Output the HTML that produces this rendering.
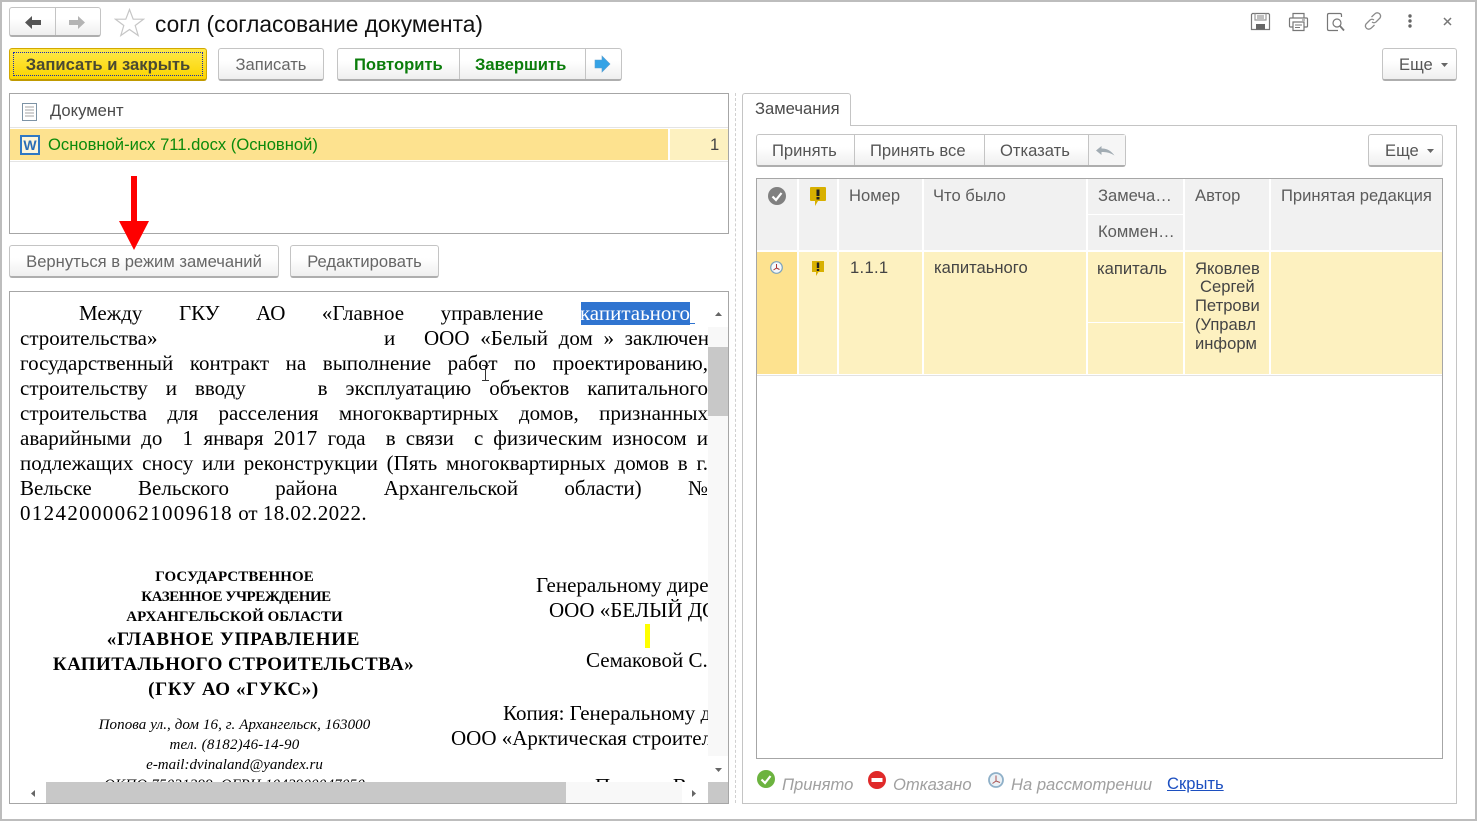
<!DOCTYPE html>
<html lang="ru"><head><meta charset="utf-8"><title>согл</title>
<style>
html,body{margin:0;padding:0;background:#fff}
body{width:1477px;height:821px;position:relative;overflow:hidden;font-family:"Liberation Sans",sans-serif;color:#4a4a4a;font-size:16.6px}
.a{position:absolute}
.t{position:absolute;white-space:nowrap;line-height:20px;margin-top:1px}
.b{position:absolute;box-sizing:border-box;border:1px solid #c4c4c4;border-bottom:2px solid #aeaeae;border-radius:3px;background:linear-gradient(#fff 40%,#efefef);text-align:center;line-height:32px;white-space:nowrap}
.sep{position:absolute;width:1px;background:#c4c4c4}
#doc{position:absolute;left:10px;top:292px;width:698px;height:490px;overflow:hidden;font-family:"Liberation Serif",serif;color:#000}
#doc div{position:absolute;white-space:nowrap;line-height:25px;font-size:21px}
#doc .j{left:10px;width:688px;white-space:normal;text-align:justify;text-align-last:justify;height:25px;overflow:hidden}
#doc .c{text-align:center;left:0;width:449px}
#doc .s{font-size:15px;font-weight:bold;line-height:20px}
#doc .m{font-size:19px;font-weight:bold}
#doc .i{font-size:15px;font-style:italic;line-height:20px}
.wl{position:absolute;width:2px;background:#fff}
.h{color:#5c5c5c}
</style></head><body>
<!-- outer frame -->
<div class="a" style="left:0;top:0;width:1477px;height:2px;background:#bdbdbd"></div>
<div class="a" style="left:0;top:0;width:2px;height:821px;background:#bdbdbd"></div>
<div class="a" style="left:0;top:819px;width:1477px;height:2px;background:#bdbdbd"></div>
<div class="a" style="left:1475px;top:0;width:2px;height:821px;background:#bdbdbd"></div>

<!-- nav -->
<div class="b" style="left:9px;top:7px;width:92px;height:30px"></div>
<div class="sep" style="left:55px;top:8px;height:27px"></div>
<svg class="a" style="left:24px;top:15px" width="18" height="15" viewBox="0 0 18 15"><path d="M8 1 1 7.500 8 14V10H17V5H8Z" fill="#555"/></svg>
<svg class="a" style="left:68px;top:15px" width="18" height="15" viewBox="0 0 18 15"><path d="M10 1 17 7.500 10 14V10H1V5H10Z" fill="#b4b4b4"/></svg>
<svg class="a" style="left:114px;top:8px" width="31" height="29" viewBox="0 0 31 29"><path d="M15.500 1.500 19.200 11.200H29.500L21.200 17.500 24.200 27.500 15.500 21.500 6.800 27.500 9.800 17.500 1.500 11.200H11.800Z" fill="#fff" stroke="#c6c6c6" stroke-width="1.200"/></svg>
<div class="t" style="left:155px;top:12px;font-size:22.7px;color:#111;line-height:22px">согл (согласование документа)</div>

<!-- top right icons -->
<svg class="a" style="left:1250px;top:12px" width="21" height="19" viewBox="0 0 21 19" fill="none" stroke="#777" stroke-width="1.200"><path d="M2.500 1.500H18.500L19.500 2.500V17.500H1.500V2.500Z"/><path d="M5 1.500V8H16V1.500M7 4H14M7 6H14" stroke="#999"/><rect x="6" y="12" width="9" height="5.500" fill="#666" stroke="none"/></svg>
<svg class="a" style="left:1288px;top:12px" width="21" height="20" viewBox="0 0 21 20" fill="none" stroke="#777" stroke-width="1.200"><path d="M5 6V1.500H16V6"/><path d="M5 15H2.500Q1.500 15 1.500 14V7Q1.500 6 2.500 6H18.500Q19.500 6 19.500 7V14Q19.500 15 18.500 15H16"/><path d="M5 10H16V18.500H5Z"/><path d="M7 13H14M7 15.500H12M14 8H17" stroke-width="1"/></svg>
<svg class="a" style="left:1326px;top:12px" width="20" height="20" viewBox="0 0 20 20" fill="none" stroke="#777" stroke-width="1.200"><path d="M7 1.500H3Q1.500 1.500 1.500 3V17Q1.500 18.500 3 18.500H12"/><path d="M7 1.500H14Q15.500 1.500 15.500 3V5"/><circle cx="11" cy="11" r="4"/><path d="M14 14 18 18.500" stroke-width="1.800"/></svg>
<svg class="a" style="left:1363px;top:11px" width="20" height="20" viewBox="0 0 20 20" fill="none" stroke="#8a8a8a" stroke-width="1.300"><path d="M8.500 6 12 2.700Q14 1 16.300 2.500 18.500 4.500 17 7L13 11Q11 12.500 9 11"/><path d="M11.500 14 8 17.300Q6 19 3.700 17.500 1.500 15.500 3 13L7 9Q9 7.500 11 9"/></svg>
<svg class="a" style="left:1407px;top:13px" width="6" height="16" viewBox="0 0 6 16" fill="#666"><circle cx="3" cy="3" r="1.700"/><circle cx="3" cy="8" r="1.700"/><circle cx="3" cy="13" r="1.700"/></svg>
<svg class="a" style="left:1443px;top:17px" width="9" height="9" viewBox="0 0 9 9" stroke="#777" stroke-width="1.500"><path d="M1 1 8 8M8 1 1 8"/></svg>

<!-- command bar -->
<div class="b" style="left:9px;top:48px;width:198px;height:33px;background:linear-gradient(#ffe94a,#fbd400);border:1px solid #d2a800;border-bottom:2px solid #c09a00;font-weight:bold;color:#4a4a32;line-height:31px">Записать и закрыть</div>
<div class="a" style="left:13px;top:52px;width:190px;height:24px;border:1px dotted #1a2fb0;box-sizing:border-box"></div>
<div class="b" style="left:218px;top:48px;width:106px;height:33px;color:#666">Записать</div>
<div class="b" style="left:337px;top:48px;width:285px;height:33px"></div>
<div class="sep" style="left:459px;top:49px;height:30px"></div>
<div class="sep" style="left:585px;top:49px;height:30px"></div>
<div class="t" style="left:354px;top:54px;font-weight:bold;color:#0b7d0b">Повторить</div>
<div class="t" style="left:475px;top:54px;font-weight:bold;color:#0b7d0b">Завершить</div>
<svg class="a" style="left:594px;top:55px" width="17" height="18" viewBox="0 0 17 18"><path d="M1 5H8V1L16 9 8 17V13H1Z" fill="#35a3e6" stroke="#5a9fd0" stroke-width=".6"/></svg>
<div class="b" style="left:1382px;top:48px;width:75px;height:33px;text-align:left;padding-left:16px;color:#555">Еще</div>
<svg class="a" style="left:1441px;top:63px" width="7" height="4"><path d="M0 0H7L3.500 4Z" fill="#666"/></svg>

<!-- document list -->
<div class="a" style="left:9px;top:93px;width:720px;height:141px;box-sizing:border-box;border:1px solid #a6a6a6"></div>
<svg class="a" style="left:22px;top:103px" width="15" height="18" viewBox="0 0 15 18" fill="none" stroke="#7d93a5"><rect x=".5" y=".5" width="14" height="17"/><path d="M3 4H12M3 7H12M3 10H12M3 13H12" stroke="#a6a6a6"/></svg>
<div class="t" style="left:50px;top:100px;color:#4a4a4a">Документ</div>
<div class="a" style="left:10px;top:127px;width:718px;height:1px;background:#e4e4e4"></div>
<div class="a" style="left:10px;top:129px;width:658px;height:31px;background:#fde28f"></div>
<div class="a" style="left:670px;top:129px;width:58px;height:31px;background:#fdf1c0"></div>
<div class="a" style="left:10px;top:161px;width:718px;height:1px;background:#e4e4e4"></div>
<div class="a" style="left:20px;top:135px;width:20px;height:20px;box-sizing:border-box;border:2px solid #2f78c4;background:#fdf6dc;color:#2a6db5;font:bold 14px/16px 'Liberation Sans',sans-serif;text-align:center">W</div>
<div class="t" style="left:48px;top:134px;color:#0b8a0b">Основной-исх 711.docx (Основной)</div>
<div class="t" style="left:710px;top:134px;color:#444">1</div>

<!-- doc buttons -->
<div class="b" style="left:9px;top:245px;width:270px;height:33px;color:#666">Вернуться в режим замечаний</div>
<div class="b" style="left:290px;top:245px;width:149px;height:33px;color:#666">Редактировать</div>

<!-- doc viewer -->
<div class="a" style="left:9px;top:291px;width:720px;height:513px;box-sizing:border-box;border:1px solid #a6a6a6"></div>
<div id="doc">
<div style="left:571px;top:10px;width:109px;height:23px;background:#2f74d0"></div>
<div style="left:680px;top:31px;width:5px;height:1px;background:#2f74d0"></div>
<div class="j" style="top:9px;padding-left:59px;width:611px;left:10px">Между ГКУ АО «Главное управление <span style="color:#fff">капитаьного</span></div>
<div style="left:10px;top:34px">строительства»</div><div style="left:374px;top:34px">и</div><div style="left:414px;top:34px;width:285px;text-align:justify;text-align-last:justify;white-space:normal;height:25px">ООО «Белый дом » заключен</div>
<div class="j" style="top:59px">государственный контракт на выполнение работ по проектированию,</div>
<div class="j" style="top:84px">строительству и вводу &nbsp;&nbsp; в эксплуатацию объектов капитального</div>
<div class="j" style="top:109px">строительства для расселения многоквартирных домов, признанных</div>
<div class="j" style="top:134px">аварийными до &nbsp;<span style="letter-spacing:.5px">1</span> января <span style="letter-spacing:.5px">2017</span> года &nbsp;в связи &nbsp;с физическим износом и</div>
<div class="j" style="top:159px">подлежащих сносу или реконструкции (Пять многоквартирных домов в г.</div>
<div class="j" style="top:184px">Вельске Вельского района Архангельской области) №</div>
<div style="left:10px;top:209px"><span style="letter-spacing:1.33px">012420000621009618</span> от <span style="letter-spacing:.4px">18.02.2022.</span></div>

<div class="c s" style="top:275px;letter-spacing:.07px">ГОСУДАРСТВЕННОЕ</div>
<div class="c s" style="top:295px;letter-spacing:-.43px;width:472px;left:0;width:472px;margin-left:-10px">КАЗЕННОЕ УЧРЕЖДЕНИЕ</div>
<div class="c s" style="top:315px;letter-spacing:.02px">АРХАНГЕЛЬСКОЙ ОБЛАСТИ</div>
<div class="c m" style="top:335px;letter-spacing:.77px;width:447px">«ГЛАВНОЕ УПРАВЛЕНИЕ</div>
<div class="c m" style="top:360px;letter-spacing:.44px;width:447px">КАПИТАЛЬНОГО СТРОИТЕЛЬСТВА»</div>
<div class="c m" style="top:385px;letter-spacing:.63px;width:447px">(ГКУ АО «ГУКС»)</div>
<div class="c i" style="top:423px;letter-spacing:.09px">Попова ул., дом 16, г. Архангельск, 163000</div>
<div class="c i" style="top:443px;letter-spacing:.2px">тел. (8182)46-14-90</div>
<div class="c i" style="top:463px;letter-spacing:0">e-mail:dvinaland@yandex.ru</div>
<div class="c i" style="top:483px;letter-spacing:.2px">ОКПО 75031299, ОГРН 1042900047050</div>

<div style="left:526px;top:281px">Генеральному директору</div>
<div style="left:539px;top:306px">ООО «БЕЛЫЙ ДОМ»</div>
<div style="left:635px;top:332px;width:5px;height:24px;background:#ffff00"></div>
<div style="left:576px;top:356px">Семаковой С.А.</div>
<div style="left:493px;top:409px">Копия: Генеральному директору</div>
<div style="left:441px;top:434px">ООО «Арктическая строительная</div>
<div style="left:585px;top:482px">Прочие: Вам</div>
</div>
<!-- v scrollbar -->
<div class="a" style="left:708px;top:327px;width:20px;height:429px;background:#f8f8f8"></div>
<div class="a" style="left:708px;top:347px;width:20px;height:69px;background:#c8c8c8"></div>
<svg class="a" style="left:715px;top:312px" width="7" height="4"><path d="M0 4H7L3.500 0Z" fill="#666"/></svg>
<svg class="a" style="left:715px;top:768px" width="7" height="4"><path d="M0 0H7L3.500 4Z" fill="#666"/></svg>
<!-- h scrollbar -->
<div class="a" style="left:10px;top:782px;width:698px;height:21px;background:#fff"></div>
<div class="a" style="left:46px;top:782px;width:520px;height:21px;background:#c8c8c8"></div>
<div class="a" style="left:566px;top:782px;width:116px;height:21px;background:#f8f8f8"></div>
<div class="a" style="left:708px;top:782px;width:20px;height:21px;background:#c8c8c8"></div>
<svg class="a" style="left:31px;top:790px" width="4" height="7"><path d="M4 0V7L0 3.500Z" fill="#666"/></svg>
<svg class="a" style="left:692px;top:790px" width="4" height="7"><path d="M0 0V7L4 3.500Z" fill="#666"/></svg>

<!-- splitter -->
<div class="a" style="left:735px;top:93px;width:0;height:710px;border-left:1px dashed #d0d0d0"></div>

<!-- right tab -->
<div class="a" style="left:742px;top:125px;width:715px;height:679px;box-sizing:border-box;border:1px solid #c4c4c4"></div>
<div class="a" style="left:742px;top:93px;width:109px;height:33px;box-sizing:border-box;border:1px solid #c4c4c4;border-bottom:none;border-radius:3px 3px 0 0;background:#fff"></div>
<div class="t" style="left:755px;top:98px;color:#4a4a4a">Замечания</div>

<div class="b" style="left:756px;top:134px;width:370px;height:33px"></div>
<div class="a" style="left:1089px;top:135px;width:36px;height:30px;background:#f6f6f6"></div>
<div class="sep" style="left:854px;top:135px;height:30px"></div>
<div class="sep" style="left:984px;top:135px;height:30px"></div>
<div class="sep" style="left:1088px;top:135px;height:30px"></div>
<div class="t" style="left:772px;top:140px;color:#555">Принять</div>
<div class="t" style="left:870px;top:140px;color:#555">Принять все</div>
<div class="t" style="left:1000px;top:140px;color:#555">Отказать</div>
<svg class="a" style="left:1096px;top:146px" width="19" height="10" viewBox="0 0 19 10"><path d="M5.500 0V2.500Q13 2 18.500 9.500 12.500 5.500 5.500 6V9L0 4.500Z" fill="#a2acb3"/></svg>
<div class="b" style="left:1368px;top:134px;width:75px;height:33px;text-align:left;padding-left:16px;color:#555">Еще</div>
<svg class="a" style="left:1427px;top:149px" width="7" height="4"><path d="M0 0H7L3.500 4Z" fill="#666"/></svg>

<!-- table -->
<div class="a" style="left:756px;top:178px;width:687px;height:581px;box-sizing:border-box;border:1px solid #a6a6a6"></div>
<div class="a" style="left:757px;top:179px;width:685px;height:71px;background:#f1f1f1"></div>
<div class="a" style="left:757px;top:252px;width:685px;height:122px;background:#fdf1c0"></div>
<div class="a" style="left:757px;top:252px;width:40px;height:122px;background:#fde28f"></div>
<div class="a" style="left:757px;top:375px;width:685px;height:1px;background:#e2e2e2"></div>
<div class="wl" style="left:797px;top:179px;height:195px"></div>
<div class="wl" style="left:837px;top:179px;height:195px"></div>
<div class="wl" style="left:922px;top:179px;height:195px"></div>
<div class="wl" style="left:1086px;top:179px;height:195px"></div>
<div class="wl" style="left:1183px;top:179px;height:195px"></div>
<div class="wl" style="left:1269px;top:179px;height:195px"></div>
<div class="a" style="left:1088px;top:214px;width:95px;height:1px;background:#fff"></div>
<div class="a" style="left:1088px;top:322px;width:95px;height:1px;background:#fff"></div>

<svg class="a" style="left:768px;top:187px" width="18" height="18" viewBox="0 0 18 18"><circle cx="9" cy="9" r="9" fill="#808080"/><path d="M4.500 9.500 8 13 13.500 6" fill="none" stroke="#fff" stroke-width="2.200"/></svg>
<svg class="a" style="left:810px;top:187px" width="16" height="19" viewBox="0 0 16 19"><path d="M1 0H15Q16 0 16 1V13Q16 14 15 14H8L5 19V14H1Q0 14 0 13V1Q0 0 1 0Z" fill="#d8b000"/><path d="M6.500 2.500H9.500V9H6.500ZM6.500 10H9.500V12.500H6.500Z" fill="#222"/></svg>
<div class="t h" style="left:849px;top:185px">Номер</div>
<div class="t h" style="left:933px;top:185px">Что было</div>
<div class="t h" style="left:1098px;top:185px">Замеча…</div>
<div class="t h" style="left:1098px;top:221px">Коммен…</div>
<div class="t h" style="left:1195px;top:185px">Автор</div>
<div class="t h" style="left:1281px;top:185px">Принятая редакция</div>

<svg class="a" style="left:770px;top:261px" width="13" height="13" viewBox="0 0 13 13" fill="none"><circle cx="6.500" cy="6.500" r="5.800" fill="#f4f8fb" stroke="#7da3bd" stroke-width="1.200"/><path d="M6.500 3V7L3.500 9M6.500 7 9.500 8.500" stroke="#a33" stroke-width="1"/></svg>
<svg class="a" style="left:812px;top:261px" width="12" height="15" viewBox="0 0 12 15"><path d="M0 0H12V11H6.500L4 15V11H0Z" fill="#d8b000"/><path d="M4.800 1.500H7.200V7H4.800ZM4.800 8H7.200V10H4.800Z" fill="#222"/></svg>
<div class="t" style="left:850px;top:257px;color:#444;letter-spacing:.3px">1.1.1</div>
<div class="t" style="left:934px;top:257px;color:#444">капитаьного</div>
<div class="t" style="left:1097px;top:258px;color:#444">капиталь</div>
<div class="t" style="left:1195px;top:258px;color:#444">Яковлев</div>
<div class="t" style="left:1200px;top:276px;color:#444">Сергей</div>
<div class="t" style="left:1195px;top:295px;color:#444">Петрови</div>
<div class="t" style="left:1195px;top:314px;color:#444">(Управл</div>
<div class="t" style="left:1195px;top:333px;color:#444">информ</div>

<!-- legend -->
<svg class="a" style="left:757px;top:770px" width="18" height="18" viewBox="0 0 18 18"><circle cx="9" cy="9" r="9" fill="#6cb33f"/><path d="M4.500 9.500 8 13 13.500 6" fill="none" stroke="#fff" stroke-width="2.200"/></svg>
<div class="t" style="left:782px;top:774px;font-style:italic;color:#a0a0a0">Принято</div>
<svg class="a" style="left:868px;top:771px" width="18" height="18" viewBox="0 0 18 18"><circle cx="9" cy="9" r="9" fill="#e02a2a"/><rect x="3.500" y="7" width="11" height="4" fill="#fff"/></svg>
<div class="t" style="left:893px;top:774px;font-style:italic;color:#a0a0a0">Отказано</div>
<svg class="a" style="left:988px;top:772px" width="16" height="16" viewBox="0 0 16 16" fill="none"><circle cx="8" cy="8" r="7" fill="#eaf1f6" stroke="#8fb0c8" stroke-width="1.800"/><path d="M8 3.500V9L4.500 11.500M8 9 12 10.500" stroke="#a55" stroke-width="1"/></svg>
<div class="t" style="left:1011px;top:774px;font-style:italic;color:#a0a0a0">На рассмотрении</div>
<div class="t" style="left:1167px;top:773px;color:#1c4fc0;text-decoration:underline">Скрыть</div>

<!-- red arrow -->
<svg class="a" style="left:118px;top:175px" width="32" height="76" viewBox="0 0 32 76"><rect x="13" y="1" width="6" height="46" fill="#fe0000"/><path d="M1 46H31L16 75Z" fill="#fe0000"/></svg>
<!-- I-beam -->
<svg class="a" style="left:481px;top:365px" width="9" height="16" viewBox="0 0 9 16"><path d="M1 .5H8M4.500 .5V15.500M1 15.500H8" stroke="#333" stroke-width="1" fill="none"/></svg>
</body></html>
